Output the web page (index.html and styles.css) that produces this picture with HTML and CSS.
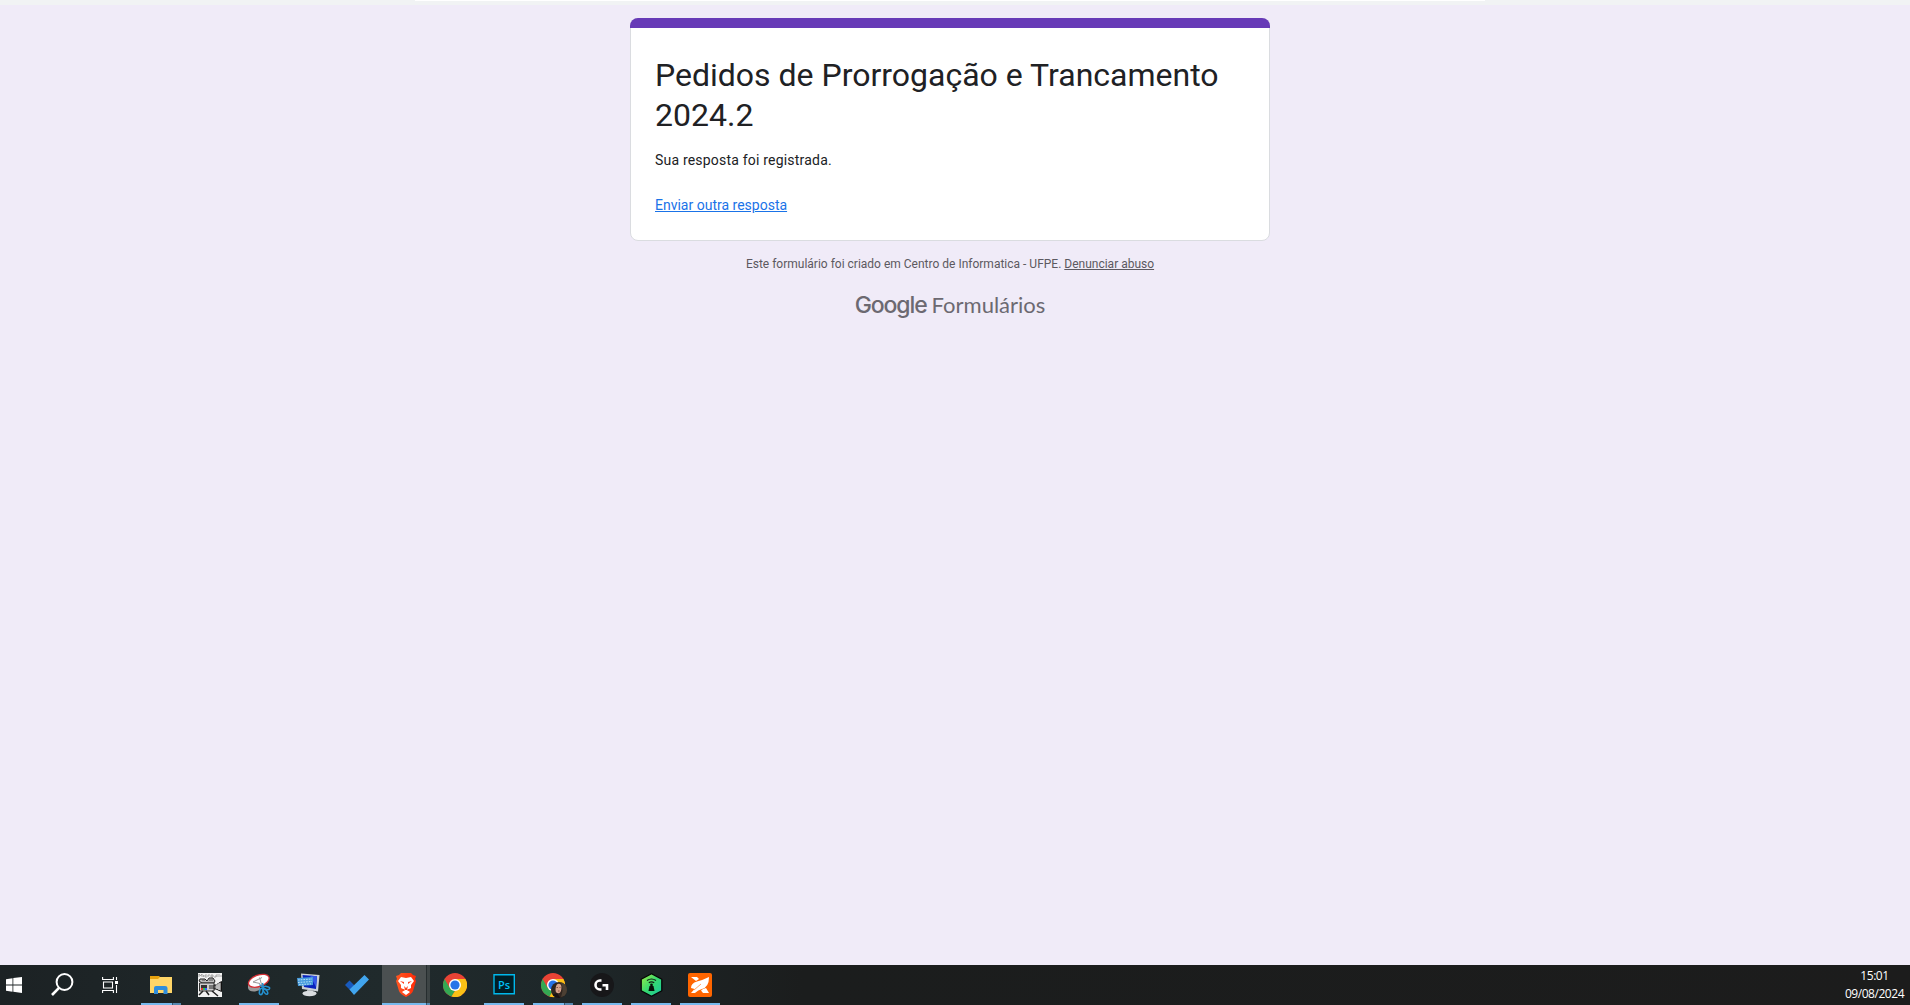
FILE: index.html
```html
<!DOCTYPE html>
<html lang="pt-BR">
<head>
<meta charset="utf-8">
<title>Pedidos de Prorrogação e Trancamento 2024.2</title>
<link rel="stylesheet" href="styles.css">
</head>
<body>
<div class="browser-edge"><div class="address-edge"></div></div>
<main class="page">
  <section class="card">
    <div class="card-accent"></div>
    <div class="card-body">
      <h1 class="title">Pedidos de Prorrogação e Trancamento 2024.2</h1>
      <p class="message">Sua resposta foi registrada.</p>
      <a class="again" href="#">Enviar outra resposta</a>
    </div>
  </section>
  <p class="notice">Este formulário foi criado em Centro de Informatica - UFPE. <a href="#">Denunciar abuso</a></p>
  <div class="brand"><span class="brand-google">Google</span><span class="brand-forms">Formulários</span></div>
</main>
<footer class="taskbar">
  <div class="system">
    <svg class="start" width="16" height="16" viewBox="0 0 16 16" fill="#fff"><path d="M0 2.2 6.5 1.3V7.5H0ZM7.3 1.1 16 0V7.5H7.3ZM0 8.4H6.5V14.7L0 13.8ZM7.3 8.4H16V16L7.3 14.8Z"/></svg>
    <svg class="search" width="23" height="23" viewBox="0 0 23 23" fill="none" stroke="#fff"><circle cx="13.5" cy="9" r="7.9" stroke-width="2"/><path d="M8 14.8 1 22" stroke-width="2.6"/></svg>
    <svg class="tasks" width="17" height="16" viewBox="0 0 17 16" fill="none" stroke="#fff"><path d="M.6 0V2.5H11.4V0M.6 16V13.5H11.4V16M1.5 5H10.5V11H1.5ZM14.5 0V3M14.5 8V16" stroke-width="1.1"/><path d="M13 4H16V7H13Z" fill="#fff" stroke="none"/></svg>
  </div>
  <div class="apps">
    <div class="app open stacked"><svg width="24" height="24" viewBox="0 0 24 24"><path d="M1 3H10L12 5H23V20H1Z" fill="#e6a20f"/><path d="M1 6H9L11 4H23V20H1Z" fill="#ffd567"/><path d="M5 21V15Q5 13 7 13H16Q18.500 13 18.500 15V21H14.500V17H9V21Z" fill="#2f8ddb"/></svg></div>
    <div class="app"><svg width="24" height="24" viewBox="0 0 24 24"><path d="M0 0H24V24H0Z" fill="#f2f2f2"/><path d="M1 4V1L2.500 3 4 1V4M5.500 2V4M9 2H7V4H9M10 4V2H12M13 2H15V4H13ZM16 4H18V2M19 4V1M21 4V1M23 4V2" fill="none" stroke="#888" stroke-width=".7"/><path d="M2 6H7L9 8 11 5H15L17 8 16 10H4L1 8Z" fill="#bbb" stroke="#222"/><path d="M4 7H7M11 7H15" stroke="#555"/><path d="M1.500 10H16V18H1.500Z" fill="#ccc" stroke="#333"/><path d="M16 12H18L23.500 8.500V18.500L18 16H16Z" fill="#888" stroke="#111"/><path d="M19 11V16M21 10V17" stroke="#eee"/><path d="M5 18 1 22M8 18 11 22M14 18 20 23" stroke="#222" stroke-width="1.500"/><path d="M3 12H9V17H3Z" fill="#333"/><path d="M3 15H5V17H3Z" fill="#e33"/><path d="M5 15H7V17H5Z" fill="#2c5"/><path d="M7 15H9V17H7Z" fill="#36f"/><path d="M11 12H15V16H11Z" fill="#777"/></svg></div>
    <div class="app open"><svg width="24" height="24" viewBox="0 0 24 24"><path d="M1 10V15Q2 19 8 18.500L13 17V14Z" fill="#999"/><ellipse cx="11.800" cy="7.800" rx="10.800" ry="5.700" transform="rotate(-20 11.800 7.800)" fill="#fff" stroke="#d62f35" stroke-width="1.300"/><path d="M15 4.500 6 9 13 10.500M12.500 4.500 15 13" fill="none" stroke="#999" stroke-width="1"/><g fill="none" stroke="#2491d0" stroke-width="1.500"><path d="M12.500 11.500 16 14.500M15.500 10 16.500 15"/><ellipse cx="19.500" cy="15" rx="3.200" ry="1.600" transform="rotate(8 19.500 15)"/><ellipse cx="14.200" cy="18.500" rx="1.700" ry="3.200" transform="rotate(15 14.200 18.500)"/><ellipse cx="18.500" cy="18.500" rx="1.500" ry="3.200" transform="rotate(-35 18.500 18.500)"/></g></svg></div>
    <div class="app"><svg width="24" height="24" viewBox="0 0 24 24"><path d="M5 .5 23.500 2 22 18.500 6 16Z" fill="#cbd1d7"/><path d="M6.500 2 21 3.200 20 16 8 14Z" fill="#0923bd"/><path d="M14 2.600 21 3.200 20 14Z" fill="#3558e8"/><path d="M11 17H17V20H11Z" fill="#aeb3b8"/><ellipse cx="13.500" cy="20.500" rx="7" ry="2.700" fill="#dadde0"/><path d="M1 5 17 4V12L2 13Z" fill="#469bdd"/><path d="M2 7 16 6M2 9.500 16 8.500M3 11.700 15 10.900" stroke="#b6def5" stroke-width="1" stroke-dasharray="1.700 1"/></svg></div>
    <div class="app"><svg width="24" height="24" viewBox="0 0 24 24"><path d="M0 12 4.500 7.500 12 15 8 20Z" fill="#185abd"/><path d="M4.500 16.500 19.500 2 24 6.500 9 22Z" fill="#41a5ee"/></svg></div>
    <div class="app open active stacked"><svg width="24" height="24" viewBox="0 0 24 24"><defs><linearGradient id="brave"><stop stop-color="#ff5722"/><stop offset="1" stop-color="#ff2b08"/></linearGradient></defs><path d="M7 0H17L19 2 22 3 21 6 22 8 19 18Q18 21 12 24 6 21 5 18L2 8 3 6 2 3 5 2Z" fill="url(#brave)"/><path d="M7 4 12 5 17 4 20 8 17 12 17 15 13 17 16 19 12 22 8 19 11 17 7 15 7 12 4 8Z" fill="#fff"/><path d="M6 8 10 9 10 11ZM18 8 14 9 14 11ZM10 13 12 15 14 13 13 17H11ZM9 16 11 17 8 18ZM15 16 13 17 16 18Z" fill="#ff431d"/></svg></div>
    <div class="app"><svg width="24" height="24" viewBox="0 0 24 24"><g id="chrome"><circle cx="12" cy="12" r="12" fill="#ea4335"/><path d="M1.600 6 6.800 15 12 18 8.500 23.500A12 12 0 0 1 1.600 6Z" fill="#34a853"/><path d="M12 6H22.400A12 12 0 0 1 8.500 23.500L12 18 17.200 15Z" fill="#fbc116"/><circle cx="12" cy="12" r="6" fill="#fff"/><circle cx="12" cy="12" r="4.600" fill="#2874e8"/></g></svg></div>
    <div class="app open"><svg width="24" height="24" viewBox="0 0 24 24"><path d="M2 1.700H22.300V20.800H2Z" fill="#001e26" stroke="#00b8ec" stroke-width="1.400"/><text class="ps" x="6" y="15.500">Ps</text></svg></div>
    <div class="app open stacked"><svg class="profile" width="26" height="26" viewBox="0 0 26 26"><use href="#chrome" y="1"/><clipPath id="face"><circle cx="18" cy="18" r="8"/></clipPath><g clip-path="url(#face)"><path d="M10 9H27V27H10Z" fill="#30251f"/><ellipse cx="17.500" cy="16.500" rx="2.900" ry="4.800" transform="rotate(8 17.500 16.500)" fill="#d7a38b"/><path d="M20 11Q23 17 20 25L26 23V10Z" fill="#4c4033"/><path d="M10 23 16 21 20 27H10Z" fill="#171314"/><path d="M15.500 15.500H17M18.500 15.500H19.500M17 19H18.500" stroke="#753f36" stroke-width=".8"/></g></svg></div>
    <div class="app open"><svg width="24" height="24" viewBox="0 0 24 24"><circle cx="12" cy="12" r="12" fill="#171719"/><path d="M11.500 7.500H10A4.500 4.500 0 0 0 10 16.500H11.500M12.500 12.200H17V17" fill="none" stroke="#fff" stroke-width="2.600"/></svg></div>
    <div class="app open"><svg width="24" height="24" viewBox="0 0 24 24"><defs><linearGradient id="shield" x2="1" y2="1"><stop stop-color="#a0ec43"/><stop offset=".5" stop-color="#36d970"/><stop offset="1" stop-color="#18c6a2"/></linearGradient></defs><path d="M12.500 .7 22.800 6.300V17.700L12.500 23.300 2.200 17.700V6.300Z" fill="url(#shield)" stroke="#050505" stroke-width="1.300" stroke-linejoin="round"/><path d="M8 7.500Q12.500 4.500 17 7.500M9.800 9.700Q12.500 8 15.200 9.700" fill="none" stroke="#112018" stroke-width="1.200"/><circle cx="12.500" cy="12" r="1.400" fill="#071009"/><path d="M10.500 13H14.500L15.500 18H9.500Z" fill="#071009"/></svg></div>
    <div class="app open"><svg width="24" height="24" viewBox="0 0 24 24"><rect width="24" height="24" rx="2" fill="#ff6500"/><path d="M3 4H9L11 6 8 8ZM15 16 18 15 21 20H15L13 17.500Z" fill="#fff"/><path d="M21 4Q21 14 14 16 10 17 7 20H3L6.500 16 3 15Q3 10 9 8.500 15 7 21 4Z" fill="#fff"/><path d="M6 17 13 11" stroke="#ff6500" stroke-width=".6"/></svg></div>
  </div>
  <div class="clock"><span>15:01</span><span>09/08/2024</span></div>
</footer>
</body>
</html>
```
FILE: styles.css
```css
* { box-sizing: border-box; }
body { margin: 0; height: 100vh; display: flex; flex-direction: column; overflow: hidden; background: #f0ebf8; font-family: Roboto, sans-serif; }
.browser-edge { flex: none; height: 5px; background: #f1f3f4; }
.address-edge { height: 1px; margin: 0 425px 0 415px; background: #fff; }
.page { flex: 1; display: flex; flex-direction: column; align-items: center; padding: 13px 10px 0 0; }
.card { width: 640px; height: 223px; border: 1px solid #dadce0; border-radius: 8px; background: #fff; }
.card-accent { height: 10px; margin: -1px -1px 0; border-radius: 8px 8px 0 0; background: #673ab7; }
.card-body { padding: 27px 24px 0; }
.title { margin: 0; font-size: 32px; line-height: 40px; font-weight: 400; color: #202124; }
.message { margin: 15px 0 0; font-size: 14px; line-height: 20px; letter-spacing: .2px; color: #202124; }
.again { display: block; width: max-content; margin-top: 25px; font-size: 14px; line-height: 20px; color: #1a73e8; }
.notice { margin: 15px 0 0; font-size: 12px; line-height: 16px; color: #5c5960; }
.notice a { color: inherit; }
.brand { display: flex; align-items: baseline; gap: 5px; margin-top: 19px; line-height: 28px; color: #6c6971; }
.brand-google { font: 500 23px/28px Inter, sans-serif; letter-spacing: -1.1px; }
.brand-forms { font: 22px/28px Lato, sans-serif; }
.taskbar { flex: none; height: 40px; display: flex; justify-content: space-between; background: linear-gradient(90deg, #1c2224, #202a2c 20%, #1e2729 30%, #1b1d1d 42%, #1c1c1c); }
.system { width: 137px; flex: none; display: flex; align-items: center; padding-left: 6px; }
.search { margin: 0 0 1px 29px; }
.tasks { margin-left: 28px; }
.apps { flex: 1; display: flex; }
.app { position: relative; width: 48px; margin-right: 1px; display: flex; align-items: center; justify-content: center; }
.app.open::after { content: ""; position: absolute; left: 4px; bottom: 0; width: 40px; height: 2px; background: #76b9ed; }
.app.stacked::after { background: linear-gradient(90deg, #76b9ed 31px, #36566c 31px, #36566c 32px, #5688b0 32px); }
.app.active { background: linear-gradient(90deg, #4b5051 44px, #262d2f 44px, #262d2f 45px, #3d4445 45px); }
.app.active::after { left: 0; width: 48px; background: linear-gradient(90deg, #76b9ed 44px, #36566c 44px, #36566c 45px, #5688b0 45px); }
.profile { margin-left: 2px; }
.ps { font: 600 11px "Open Sans", sans-serif; fill: #00c0f5; }
.clock { flex: none; width: 70px; display: flex; flex-direction: column; align-items: center; padding: 2px 1px 0 0; font: 12px/18px "Open Sans", sans-serif; letter-spacing: -.45px; color: #fff; }
```
